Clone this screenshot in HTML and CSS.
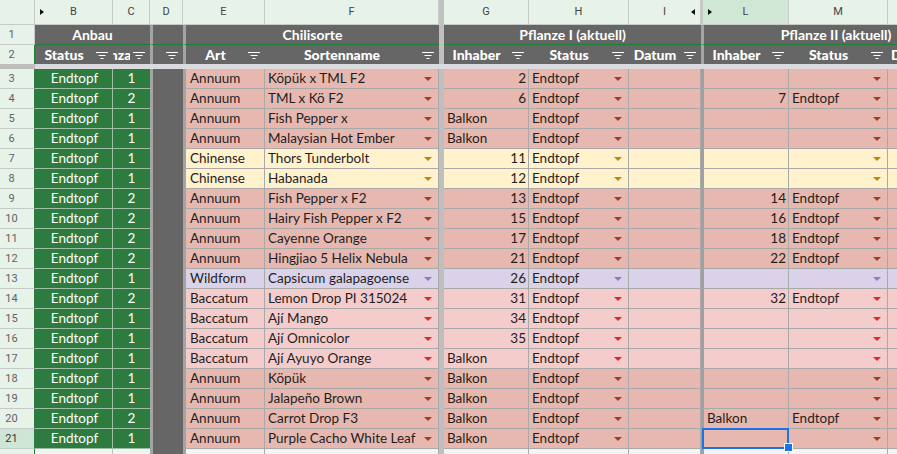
FILE: index.html
```html
<!DOCTYPE html>
<html lang="de">
<head>
<meta charset="utf-8">
<title>Chili</title>
<link rel="stylesheet" href="styles.css">
</head>
<body>
<div class="sheet">
  <div class="row letters">
    <div class="rh"></div>
    <div class="lt hidl">B</div>
    <div class="lt">C</div>
    <div class="lt">D</div>
    <div class="lt">E</div>
    <div class="lt">F</div>
    <div class="fz"></div>
    <div class="lt">G</div>
    <div class="lt">H</div>
    <div class="lt hidr">I</div>
    <div class="lt hidl selcol">L</div>
    <div class="lt">M</div>
    <div class="lt"></div>
  </div>
  <div class="row h1">
    <div class="rh">1</div>
    <div class="hc span-bc">Anbau</div>
    <div class="hc hd"></div>
    <div class="hc he span-ef">Chilisorte</div>
    <div class="fz"></div>
    <div class="hc span-gi">Pflanze I (aktuell)</div>
    <div class="hc hl span-ln">Pflanze II (aktuell)</div>
  </div>
  <div class="row h2">
    <div class="rh">2</div>
    <div class="hc"><span class="t"><b>Status</b></span><svg class="fi" width="12" height="7" viewBox="0 0 12 7"><path d="M0 .5h12M2.5 3.5h7M4.5 6.5h3" stroke="#fff"/></svg></div>
    <div class="hc"><span class="t"><b>Anzahl</b></span><svg class="fi" width="12" height="7" viewBox="0 0 12 7"><path d="M0 .5h12M2.5 3.5h7M4.5 6.5h3" stroke="#fff"/></svg></div>
    <div class="hc hd"><span class="t"></span><svg class="fi" width="12" height="7" viewBox="0 0 12 7"><path d="M0 .5h12M2.5 3.5h7M4.5 6.5h3" stroke="#fff"/></svg></div>
    <div class="hc he"><span class="t"><b>Art</b></span><svg class="fi" width="12" height="7" viewBox="0 0 12 7"><path d="M0 .5h12M2.5 3.5h7M4.5 6.5h3" stroke="#fff"/></svg></div>
    <div class="hc"><span class="t"><b>Sortenname</b></span><svg class="fi" width="12" height="7" viewBox="0 0 12 7"><path d="M0 .5h12M2.5 3.5h7M4.5 6.5h3" stroke="#fff"/></svg></div>
    <div class="fz"></div>
    <div class="hc"><span class="t"><b>Inhaber</b></span><svg class="fi" width="12" height="7" viewBox="0 0 12 7"><path d="M0 .5h12M2.5 3.5h7M4.5 6.5h3" stroke="#fff"/></svg></div>
    <div class="hc"><span class="t"><b>Status</b></span><svg class="fi" width="12" height="7" viewBox="0 0 12 7"><path d="M0 .5h12M2.5 3.5h7M4.5 6.5h3" stroke="#fff"/></svg></div>
    <div class="hc"><span class="t"><b>Datum</b></span><svg class="fi" width="12" height="7" viewBox="0 0 12 7"><path d="M0 .5h12M2.5 3.5h7M4.5 6.5h3" stroke="#fff"/></svg></div>
    <div class="hc hl"><span class="t"><b>Inhaber</b></span><svg class="fi" width="12" height="7" viewBox="0 0 12 7"><path d="M0 .5h12M2.5 3.5h7M4.5 6.5h3" stroke="#fff"/></svg></div>
    <div class="hc"><span class="t"><b>Status</b></span><svg class="fi" width="12" height="7" viewBox="0 0 12 7"><path d="M0 .5h12M2.5 3.5h7M4.5 6.5h3" stroke="#fff"/></svg></div>
    <div class="hc hn"><b>Datum</b></div>
  </div>
  <div class="row frz">
    <div class="frz-rh"></div>
    <div class="frz-bar"></div>
  </div>

  <div class="row data ann"><div class="rh">3</div><div class="b">Endtopf</div><div class="c">1</div><div class="d"></div><div class="e">Annuum</div><div class="dd"><span>Köpük x TML F2</span><i></i></div><div class="fz"></div><div class="r">2</div><div class="dd"><span>Endtopf</span><i></i></div><div></div><div class="l"></div><div class="dd"><span></span><i></i></div><div></div></div>
  <div class="row data ann"><div class="rh">4</div><div class="b">Endtopf</div><div class="c">2</div><div class="d"></div><div class="e">Annuum</div><div class="dd"><span>TML x Kö F2</span><i></i></div><div class="fz"></div><div class="r">6</div><div class="dd"><span>Endtopf</span><i></i></div><div></div><div class="l r">7</div><div class="dd"><span>Endtopf</span><i></i></div><div></div></div>
  <div class="row data ann"><div class="rh">5</div><div class="b">Endtopf</div><div class="c">1</div><div class="d"></div><div class="e">Annuum</div><div class="dd"><span>Fish Pepper x</span><i></i></div><div class="fz"></div><div>Balkon</div><div class="dd"><span>Endtopf</span><i></i></div><div></div><div class="l"></div><div class="dd"><span></span><i></i></div><div></div></div>
  <div class="row data ann"><div class="rh">6</div><div class="b">Endtopf</div><div class="c">1</div><div class="d"></div><div class="e">Annuum</div><div class="dd"><span>Malaysian Hot Ember</span><i></i></div><div class="fz"></div><div>Balkon</div><div class="dd"><span>Endtopf</span><i></i></div><div></div><div class="l"></div><div class="dd"><span></span><i></i></div><div></div></div>
  <div class="row data chi"><div class="rh">7</div><div class="b">Endtopf</div><div class="c">1</div><div class="d"></div><div class="e">Chinense</div><div class="dd"><span>Thors Tunderbolt</span><i></i></div><div class="fz"></div><div class="r">11</div><div class="dd"><span>Endtopf</span><i></i></div><div></div><div class="l"></div><div class="dd"><span></span><i></i></div><div></div></div>
  <div class="row data chi"><div class="rh">8</div><div class="b">Endtopf</div><div class="c">1</div><div class="d"></div><div class="e">Chinense</div><div class="dd"><span>Habanada</span><i></i></div><div class="fz"></div><div class="r">12</div><div class="dd"><span>Endtopf</span><i></i></div><div></div><div class="l"></div><div class="dd"><span></span><i></i></div><div></div></div>
  <div class="row data ann"><div class="rh">9</div><div class="b">Endtopf</div><div class="c">2</div><div class="d"></div><div class="e">Annuum</div><div class="dd"><span>Fish Pepper x F2</span><i></i></div><div class="fz"></div><div class="r">13</div><div class="dd"><span>Endtopf</span><i></i></div><div></div><div class="l r">14</div><div class="dd"><span>Endtopf</span><i></i></div><div></div></div>
  <div class="row data ann"><div class="rh">10</div><div class="b">Endtopf</div><div class="c">2</div><div class="d"></div><div class="e">Annuum</div><div class="dd"><span>Hairy Fish Pepper x F2</span><i></i></div><div class="fz"></div><div class="r">15</div><div class="dd"><span>Endtopf</span><i></i></div><div></div><div class="l r">16</div><div class="dd"><span>Endtopf</span><i></i></div><div></div></div>
  <div class="row data ann"><div class="rh">11</div><div class="b">Endtopf</div><div class="c">2</div><div class="d"></div><div class="e">Annuum</div><div class="dd"><span>Cayenne Orange</span><i></i></div><div class="fz"></div><div class="r">17</div><div class="dd"><span>Endtopf</span><i></i></div><div></div><div class="l r">18</div><div class="dd"><span>Endtopf</span><i></i></div><div></div></div>
  <div class="row data ann"><div class="rh">12</div><div class="b">Endtopf</div><div class="c">2</div><div class="d"></div><div class="e">Annuum</div><div class="dd"><span>Hingjiao 5 Helix Nebula</span><i></i></div><div class="fz"></div><div class="r">21</div><div class="dd"><span>Endtopf</span><i></i></div><div></div><div class="l r">22</div><div class="dd"><span>Endtopf</span><i></i></div><div></div></div>
  <div class="row data wild"><div class="rh">13</div><div class="b">Endtopf</div><div class="c">1</div><div class="d"></div><div class="e">Wildform</div><div class="dd"><span>Capsicum galapagoense</span><i></i></div><div class="fz"></div><div class="r">26</div><div class="dd"><span>Endtopf</span><i></i></div><div></div><div class="l"></div><div class="dd"><span></span><i></i></div><div></div></div>
  <div class="row data bac"><div class="rh">14</div><div class="b">Endtopf</div><div class="c">2</div><div class="d"></div><div class="e">Baccatum</div><div class="dd"><span>Lemon Drop PI 315024</span><i></i></div><div class="fz"></div><div class="r">31</div><div class="dd"><span>Endtopf</span><i></i></div><div></div><div class="l r">32</div><div class="dd"><span>Endtopf</span><i></i></div><div></div></div>
  <div class="row data bac"><div class="rh">15</div><div class="b">Endtopf</div><div class="c">1</div><div class="d"></div><div class="e">Baccatum</div><div class="dd"><span>Ají Mango</span><i></i></div><div class="fz"></div><div class="r">34</div><div class="dd"><span>Endtopf</span><i></i></div><div></div><div class="l"></div><div class="dd"><span></span><i></i></div><div></div></div>
  <div class="row data bac"><div class="rh">16</div><div class="b">Endtopf</div><div class="c">1</div><div class="d"></div><div class="e">Baccatum</div><div class="dd"><span>Ají Omnicolor</span><i></i></div><div class="fz"></div><div class="r">35</div><div class="dd"><span>Endtopf</span><i></i></div><div></div><div class="l"></div><div class="dd"><span></span><i></i></div><div></div></div>
  <div class="row data bac"><div class="rh">17</div><div class="b">Endtopf</div><div class="c">1</div><div class="d"></div><div class="e">Baccatum</div><div class="dd"><span>Ají Ayuyo Orange</span><i></i></div><div class="fz"></div><div>Balkon</div><div class="dd"><span>Endtopf</span><i></i></div><div></div><div class="l"></div><div class="dd"><span></span><i></i></div><div></div></div>
  <div class="row data ann"><div class="rh">18</div><div class="b">Endtopf</div><div class="c">1</div><div class="d"></div><div class="e">Annuum</div><div class="dd"><span>Köpük</span><i></i></div><div class="fz"></div><div>Balkon</div><div class="dd"><span>Endtopf</span><i></i></div><div></div><div class="l"></div><div class="dd"><span></span><i></i></div><div></div></div>
  <div class="row data ann"><div class="rh">19</div><div class="b">Endtopf</div><div class="c">1</div><div class="d"></div><div class="e">Annuum</div><div class="dd"><span>Jalapeño Brown</span><i></i></div><div class="fz"></div><div>Balkon</div><div class="dd"><span>Endtopf</span><i></i></div><div></div><div class="l"></div><div class="dd"><span></span><i></i></div><div></div></div>
  <div class="row data ann"><div class="rh">20</div><div class="b">Endtopf</div><div class="c">2</div><div class="d"></div><div class="e">Annuum</div><div class="dd"><span>Carrot Drop F3</span><i></i></div><div class="fz"></div><div>Balkon</div><div class="dd"><span>Endtopf</span><i></i></div><div></div><div class="l">Balkon</div><div class="dd"><span>Endtopf</span><i></i></div><div></div></div>
  <div class="row data ann"><div class="rh selrow">21</div><div class="b">Endtopf</div><div class="c">1</div><div class="d"></div><div class="e">Annuum</div><div class="dd"><span>Purple Cacho White Leaf</span><i></i></div><div class="fz"></div><div>Balkon</div><div class="dd"><span>Endtopf</span><i></i></div><div></div><div class="l sel"></div><div class="dd"><span></span><i></i></div><div></div></div>
  <div class="row data empty"><div class="rh"></div><div class="b"></div><div class="c"></div><div class="d"></div><div class="e"></div><div></div><div class="fz"></div><div></div><div></div><div></div><div class="l"></div><div></div><div></div></div>
</div>
</body>
</html>
```
FILE: styles.css
```css
* { box-sizing: border-box; }

:root {
  --cols: 35px 78px 37px 33px 82px 174px 5px 85px 100px 72px 88px 99px 80px;
  --hdrbg: #e7f2e9;
  --grid: #a9a9a9;
}

body {
  margin: 0;
  width: 897px;
  height: 454px;
  overflow: hidden;
  background: #fff;
  font-family: Lato, "Liberation Sans", sans-serif;
  font-size: 13.5px;
  color: #1f1f1f;
}

.sheet { width: 968px; }

.row {
  display: grid;
  grid-template-columns: var(--cols);
}

/* column letters */
.letters { height: 25px; background: var(--hdrbg); }
.letters > div {
  border-right: 1px solid #c6cbc7;
  border-bottom: 1px solid #c6cbc7;
  font-family: Roboto, "Liberation Sans", sans-serif;
  font-size: 11px;
  color: #444;
  text-align: center;
  line-height: 24px;
  position: relative;
}
.letters .rh { background: var(--hdrbg); }
.letters .fz { background: #c2c2c2; border: none; }
.letters .selcol { background: #d1e7d6; border-left: 2px solid #c6cbc7; }
.hidl::before,
.hidr::after {
  content: "";
  position: absolute;
  top: 9px;
  width: 0;
  height: 0;
  border-top: 3.5px solid transparent;
  border-bottom: 3.5px solid transparent;
}
.hidl::before { left: 5px; border-left: 4px solid #111; }
.hidr::after { right: 5px; border-right: 4px solid #111; }

/* row numbers */
.rh {
  background: var(--hdrbg);
  border-right: 1px solid #c6cbc7;
  border-bottom: 1px solid #c6cbc7;
  font-family: Roboto, "Liberation Sans", sans-serif;
  font-size: 11px;
  color: #5f6368;
  text-align: center;
  padding-right: 11px;
  display: flex;
  align-items: center;
  justify-content: center;
}

/* header rows */
.h1 { height: 20px; }
.h2 { height: 19px; }
.hc {
  background: #666;
  color: #fff;
  font-weight: 700;
  font-size: 14px;
  display: flex;
  align-items: center;
  justify-content: center;
  white-space: nowrap;
  overflow: hidden;
}
.h1 .hc { border-bottom: 1px solid #1e7e34; line-height: 19px; }
.h2 .rh { border-right-color: #1e7e34; border-bottom: none; }
.h1 .rh { border-bottom-color: #c6cbc7; }
.span-bc { grid-column: 2 / 4; }
.span-ef { grid-column: 5 / 7; }
.span-gi { grid-column: 8 / 11; }
.span-ln { grid-column: 11 / 14; }
.hd { border-left: 3px solid #a4a4a4; }
.he { border-left: 3px solid #a4a4a4; }
.hl { border-left: 3px solid #a4a4a4; }
.fz { background: #bfbfbf; }
.h2 .hc { justify-content: flex-start; }
.t {
  flex: 1;
  min-width: 0;
  display: flex;
  justify-content: center;
  overflow: hidden;
}
.fi { flex: none; margin: 1px 5px 0 3px; }
.hn { justify-content: flex-start; padding-left: 3px; }

/* frozen divider */
.frz { height: 5px; }
.frz-rh { background: #bdbdbd; }
.frz-bar { grid-column: 2 / 14; background: #d9dbdf; }

/* data rows */
.data { height: 20px; }
.ann { --bg: #e6b8af; --ar: #a53a2c; }
.chi { --bg: #fff2cc; --ar: #b8870d; }
.wild { --bg: #d9d2e9; --ar: #8e7cc3; }
.bac { --bg: #f4cccc; --ar: #e0262b; }
.empty { --bg: #f3f3f3; --ar: transparent; }

.data > div {
  background: var(--bg);
  border-right: 1px solid var(--grid);
  border-bottom: 1px solid var(--grid);
  padding: 0 3px;
  line-height: 19px;
  white-space: nowrap;
  overflow: hidden;
}
.data > .rh {
  background: var(--hdrbg);
  border-right: 1px solid #2d7b3e;
  border-bottom: 1px solid #c6cbc7;
  padding: 0 11px 0 0;
  line-height: normal;
}
.data > .rh.selrow { background: #cfe5d5; color: #333; }
.data > .b,
.data > .c {
  background: #2d7b3e;
  color: #fff;
  text-align: center;
  border-color: #9dbfa5;
}
.data > .b { padding-left: 5px; }
.data > .c { border-right: none; }
.data > .d {
  background: #666;
  border-left: 3px solid #a4a4a4;
  border-right: none;
  border-bottom: none;
}
.data > .e { border-left: 3px solid #a4a4a4; padding-left: 4px; }
.data > .fz { background: #bfbfbf; border: none; padding: 0; }
.data > .l { border-left: 3px solid #a0a0a0; }
.data > .r { text-align: right; padding-right: 2px; }
.empty > div { background: #f3f3f3; }
.empty > .b, .empty > .c { background: #f3f3f3; border-color: #c0c0c0; }

.dd { display: flex; align-items: center; }
.dd span { flex: 1; min-width: 0; overflow: hidden; }
.dd i {
  flex: none;
  width: 0;
  height: 0;
  margin: 1px 3px 0 4px;
  border-left: 4px solid transparent;
  border-right: 4px solid transparent;
  border-top: 4px solid var(--ar);
}

/* selected cell */
.data > .sel { position: relative; overflow: visible; }
.sel::after {
  content: "";
  position: absolute;
  left: -2px;
  right: -1px;
  top: -1px;
  bottom: -1px;
  border: 2px solid #1a73e8;
}
.sel::before {
  content: "";
  position: absolute;
  right: -5px;
  bottom: -4px;
  width: 7px;
  height: 7px;
  background: #1a73e8;
  border: 1px solid #fff;
  z-index: 2;
}
```
